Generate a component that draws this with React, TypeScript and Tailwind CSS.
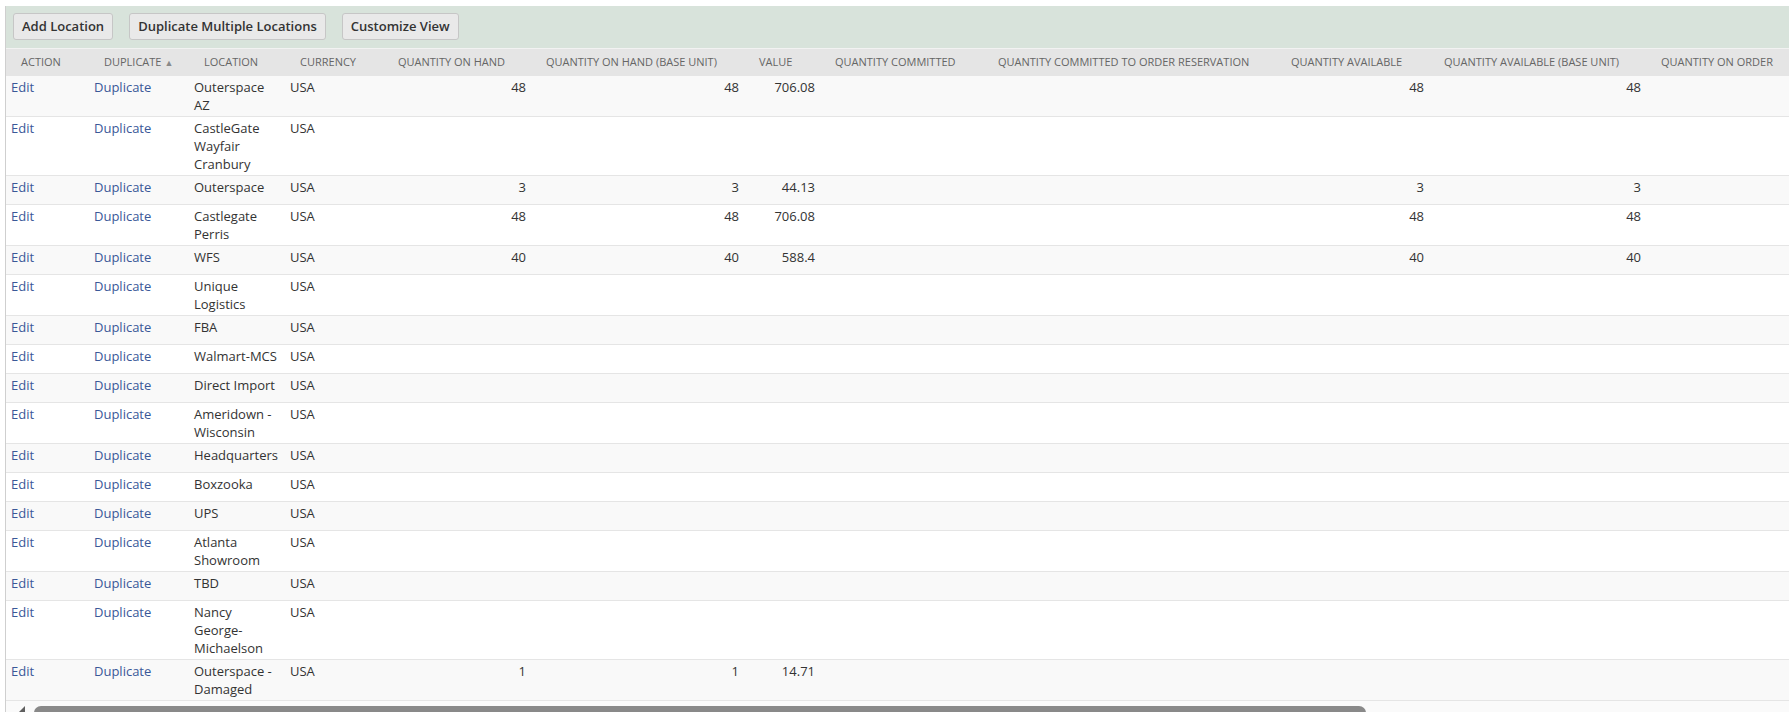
import { Fragment } from "react";

type Row = {
  location: string;
  onHand?: string;
  onHandBase?: string;
  value?: string;
  available?: string;
  availableBase?: string;
};

const columns = [
  { label: "Action", width: 83 },
  { label: "Duplicate", width: 100, sorted: true },
  { label: "Location", width: 96 },
  { label: "Currency", width: 98 },
  { label: "Quantity On Hand", width: 148 },
  { label: "Quantity On Hand (Base Unit)", width: 213 },
  { label: "Value", width: 76 },
  { label: "Quantity Committed", width: 163 },
  { label: "Quantity Committed To Order Reservation", width: 293 },
  { label: "Quantity Available", width: 153 },
  { label: "Quantity Available (Base Unit)", width: 217 },
  { label: "Quantity On Order", width: 170 },
];

const rows: Row[] = [
  { location: "Outerspace AZ", onHand: "48", onHandBase: "48", value: "706.08", available: "48", availableBase: "48" },
  { location: "CastleGate Wayfair Cranbury" },
  { location: "Outerspace", onHand: "3", onHandBase: "3", value: "44.13", available: "3", availableBase: "3" },
  { location: "Castlegate Perris", onHand: "48", onHandBase: "48", value: "706.08", available: "48", availableBase: "48" },
  { location: "WFS", onHand: "40", onHandBase: "40", value: "588.4", available: "40", availableBase: "40" },
  { location: "Unique Logistics" },
  { location: "FBA" },
  { location: "Walmart-MCS" },
  { location: "Direct Import" },
  { location: "Ameridown - Wisconsin" },
  { location: "Headquarters" },
  { location: "Boxzooka" },
  { location: "UPS" },
  { location: "Atlanta Showroom" },
  { location: "TBD" },
  { location: "Nancy George-Michaelson" },
  { location: "Outerspace - Damaged", onHand: "1", onHandBase: "1", value: "14.71" },
];

const gridCols =
  "grid grid-cols-[83px_100px_96px_98px_148px_213px_76px_163px_293px_153px_217px_170px]";

function ToolbarButton({ children }: { children: string }) {
  return (
    <button className="h-[27px] rounded-[3px] border border-[#c6c6c6] bg-[#e9e9e9] px-[8px] font-semibold text-[13px] text-[#333]">
      {children}
    </button>
  );
}

export default function App() {
  return (
    <div className="h-[712px] w-[1789px] overflow-hidden bg-white pt-[6px] pl-[5px] font-['Open_Sans',sans-serif]">
      <div className="h-full w-max border-l border-[#cfcfcf]">
        <div className="flex h-[42px] items-start gap-[16px] bg-[#d8e3db] pt-[7px] pl-[7px]">
          <ToolbarButton>Add Location</ToolbarButton>
          <ToolbarButton>Duplicate Multiple Locations</ToolbarButton>
          <ToolbarButton>Customize View</ToolbarButton>
        </div>

        <div className={`${gridCols} h-[28px] items-center border-t border-[#f2f2f2] bg-[#e5e5e5]`}>
          {columns.map((col) => (
            <div
              key={col.label}
              className="flex items-center gap-[3px] whitespace-nowrap pl-[15px] text-[11px] text-[#666] uppercase"
            >
              {col.label}
              {col.sorted && <span className="text-[9px] leading-none text-[#8a8a8a]">▲</span>}
            </div>
          ))}
        </div>

        {rows.map((row, i) => (
          <div
            key={row.location}
            className={`${gridCols} min-h-[29px] border-b border-[#e5e5e5] pt-[2px] pb-[2px] text-[13px] leading-[18px] text-[#333] ${
              i % 2 === 0 ? "bg-[#f9f9f9]" : "bg-white"
            }`}
          >
            <div className="px-[5px] text-[#3a5898]">Edit</div>
            <div className="px-[5px] text-[#3a5898]">Duplicate</div>
            <div className="px-[5px]">{row.location}</div>
            <div className="px-[5px]">USA</div>
            <Fragment>
              <div className="px-[5px] text-right">{row.onHand}</div>
              <div className="px-[5px] text-right">{row.onHandBase}</div>
              <div className="px-[5px] text-right">{row.value}</div>
              <div className="px-[5px]" />
              <div className="px-[5px]" />
              <div className="px-[5px] text-right">{row.available}</div>
              <div className="px-[5px] text-right">{row.availableBase}</div>
              <div className="px-[5px]" />
            </Fragment>
          </div>
        ))}

        {/* horizontal scrollbar, cut off by the window edge */}
        <div className="flex h-[11px] items-start bg-[#fafafa] pl-[9px]">
          <svg width="12" height="11" viewBox="0 0 12 11">
            <path d="M2 13 L10 5 L10 21 Z" fill="#5f5f5f" />
          </svg>
          <div className="mt-[5px] ml-[7px] h-[14px] w-[1332px] rounded-[7px] bg-[#898989]" />
        </div>
      </div>
    </div>
  );
}
